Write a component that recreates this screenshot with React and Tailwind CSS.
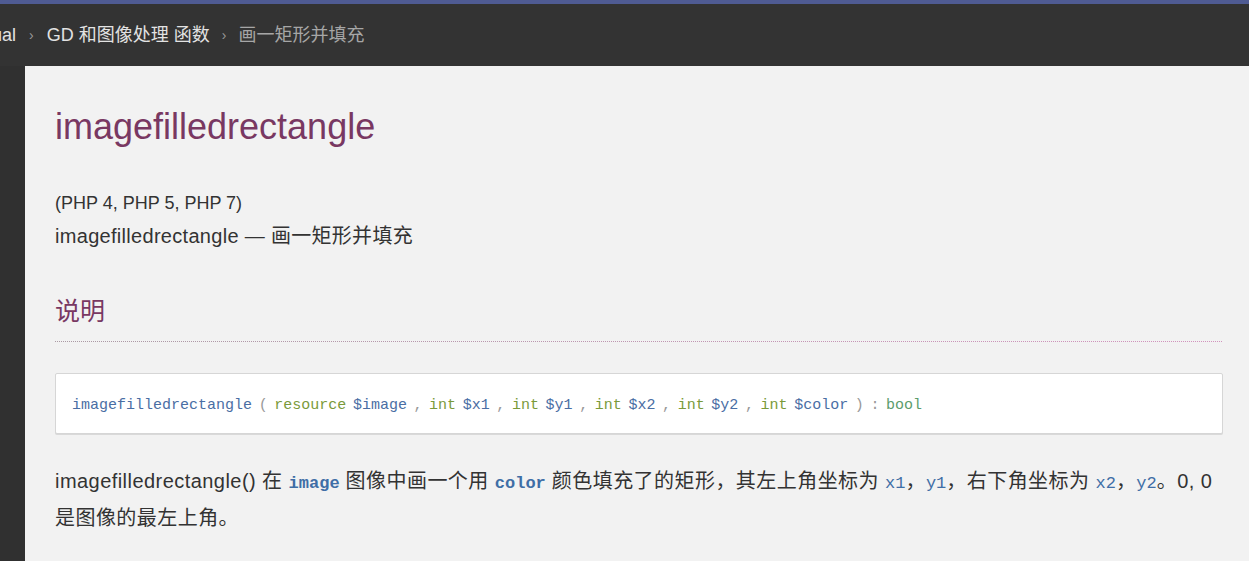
import React from "react";

const sans = "font-['Liberation_Sans','Noto_Sans_CJK_SC',sans-serif]";
const mono = "font-['Liberation_Mono','Noto_Sans_CJK_SC',monospace]";

function Synopsis() {
  const gray = "text-[#999]";
  const type = "text-[#7a9a3a]";
  const vari = "text-[#4a6ea4]";
  return (
    <div className="h-[61px] flex items-center px-4 pt-[5px] bg-white border border-[#d6d6d6] rounded-[2px] shadow-[0_1px_0_#d9d9d9]">
      <div className={`${mono} text-[15px] whitespace-pre [word-spacing:-2.4px]`}>
        <span className={vari}>imagefilledrectangle</span>
        <span className={gray}> ( </span>
        <span className={type}>resource</span> <span className={vari}>$image</span>
        <span className={gray}> , </span>
        <span className={type}>int</span> <span className={vari}>$x1</span>
        <span className={gray}> , </span>
        <span className={type}>int</span> <span className={vari}>$y1</span>
        <span className={gray}> , </span>
        <span className={type}>int</span> <span className={vari}>$x2</span>
        <span className={gray}> , </span>
        <span className={type}>int</span> <span className={vari}>$y2</span>
        <span className={gray}> , </span>
        <span className={type}>int</span> <span className={vari}>$color</span>
        <span className={gray}> ) : </span>
        <span className="text-[#5c9c6c]">bool</span>
      </div>
    </div>
  );
}

export default function App() {
  const code = `${mono} text-[17px] tracking-normal text-[#3f6ea6]`;
  return (
    <div className={`${sans} w-[1249px] h-[561px] overflow-hidden flex flex-col bg-[#333]`}>
      <div className="h-1 bg-[#4f5b93] shrink-0" />
      <div className="h-[62px] shrink-0 flex items-center overflow-hidden text-[18px] whitespace-nowrap">
        <span className="-ml-[43px] text-[#e2e2e2]">Manual</span>
        <span className="mx-[13px] text-[14px] text-[#999]">›</span>
        <span className="text-[#e2e2e2]">GD 和图像处理 函数</span>
        <span className="mx-[12px] text-[14px] text-[#999]">›</span>
        <span className="text-[#a6a6a6]">画一矩形并填充</span>
      </div>
      <div className="flex flex-1">
        <div className="w-[25px] shrink-0 bg-[#303030]" />
        <div className="flex-1 bg-[#f2f2f2] pl-[30px] pr-[26px] pt-[39px] text-[#333]">
          <h1 className="text-[36px] leading-[43px] text-[#793862]">imagefilledrectangle</h1>
          <p className="mt-[43px] text-[18px] leading-[24px]">(PHP 4, PHP 5, PHP 7)</p>
          <p className="mt-[6px] text-[20px] leading-[30px] tracking-[0.3px]">imagefilledrectangle — 画一矩形并填充</p>
          <h2 className="mt-[42px] pb-[12px] text-[25px] leading-[36px] text-[#793862]">说明</h2>
          <div className="h-px bg-[linear-gradient(to_right,#ab9aa4,#d293bd)] [mask-image:repeating-linear-gradient(to_right,black_0_1px,transparent_1px_2px)]" />
          <div className="mt-[31px]">
            <Synopsis />
          </div>
          <p className="mt-[30px] text-[20px] leading-[35px] tracking-[0.45px]">
            imagefilledrectangle() 在 <code className={`${code} font-semibold`}>image</code> 图像中画一个用{" "}
            <code className={`${code} font-semibold`}>color</code> 颜色填充了的矩形，其左上角坐标为{" "}
            <code className={code}>x1</code>，<code className={code}>y1</code>，右下角坐标为{" "}
            <code className={code}>x2</code>，<code className={code}>y2</code>。0, 0
            <br />
            是图像的最左上角。
          </p>
        </div>
      </div>
    </div>
  );
}
